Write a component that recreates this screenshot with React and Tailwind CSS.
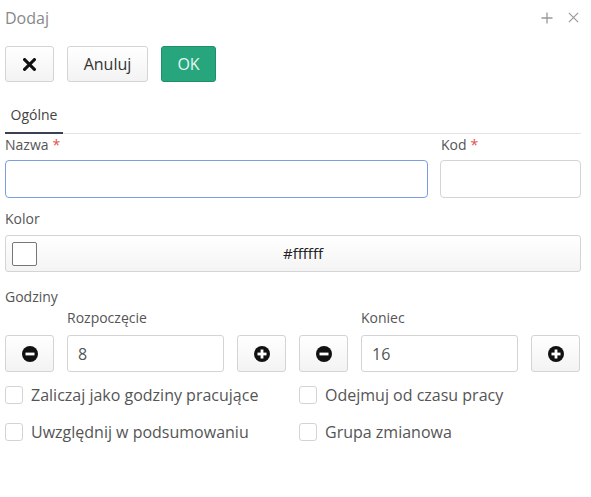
import React from "react";

function Check({ label }) {
	return (
		<label className="flex items-center gap-2 h-[20px]">
			<span className="w-[18px] h-[18px] rounded-[3px] border border-[#d4d4d4] bg-white shrink-0" />
			<span className="text-[16px] text-[#555]">{label}</span>
		</label>
	);
}

function CircleIcon({ plus }) {
	return (
		<svg viewBox="0 0 16 16" className="w-[16px] h-[16px]">
			<circle cx="8" cy="8" r="8" fill="#111" />
			<rect x="3.5" y="6.6" width="9" height="2.8" fill="#fff" />
			{plus && <rect x="6.6" y="3.5" width="2.8" height="9" fill="#fff" />}
		</svg>
	);
}

function Stepper({ label, value }) {
	return (
		<div className="flex flex-col">
			<div className="pl-[62px] h-[28px] text-[14px] text-[#555] leading-[20px] pt-[1px]">{label}</div>
			<div className="flex items-center gap-[13px]">
				<button className="w-[49px] h-[37px] rounded-[3px] border border-[#d4d4d4] bg-gradient-to-b from-white to-[#f3f3f3] flex items-center justify-center">
					<CircleIcon />
				</button>
				<div className="w-[157px] h-[37px] rounded-[3px] border border-[#d4d4d4] bg-white flex items-center px-[10px] text-[16px] text-[#555]">
					{value}
				</div>
				<button className="w-[49px] h-[37px] rounded-[3px] border border-[#d4d4d4] bg-gradient-to-b from-white to-[#f3f3f3] flex items-center justify-center">
					<CircleIcon plus />
				</button>
			</div>
		</div>
	);
}

export default function App() {
	return (
		<div className="w-[591px] h-[497px] bg-white font-['Open_Sans',sans-serif] text-[#555] pl-[5px] pr-[10px]">
			{/* header */}
			<div className="flex items-center justify-between h-[34px] pt-[1px]">
				<span className="text-[16px] text-[#888]">Dodaj</span>
				<div className="flex items-center gap-[15px] text-[#999] pr-[2px]">
					<svg viewBox="0 0 12 12" className="w-[12px] h-[12px]" stroke="currentColor" strokeWidth="1.3">
						<path d="M6 0.5v11M0.5 6h11" />
					</svg>
					<svg viewBox="0 0 12 12" className="w-[11px] h-[11px]" stroke="currentColor" strokeWidth="1.3">
						<path d="M1 1l10 10M11 1L1 11" />
					</svg>
				</div>
			</div>

			{/* toolbar */}
			<div className="flex items-center gap-[13px] mt-[12px]">
				<button className="w-[49px] h-[36px] rounded-[3px] border border-[#d4d4d4] bg-gradient-to-b from-white to-[#f3f3f3] flex items-center justify-center">
					<svg viewBox="0 0 12 12" className="w-[13px] h-[13px]" stroke="#111" strokeWidth="2.8" strokeLinecap="square">
						<path d="M1.5 1.5l9 9M10.5 1.5l-9 9" />
					</svg>
				</button>
				<button className="w-[81px] h-[36px] rounded-[3px] border border-[#d4d4d4] bg-gradient-to-b from-white to-[#f3f3f3] text-[16px] text-[#333]">
					Anuluj
				</button>
				<button className="w-[55px] h-[36px] rounded-[3px] border border-[#1f8f6b] bg-[#27a67e] text-[16px] text-[#e6f6ef]">
					OK
				</button>
			</div>

			{/* tabs */}
			<div className="mt-[17px] border-b border-[#e5e5e5] flex">
				<div className="w-[58px] h-[35px] border-b-2 border-[#3b3f55] -mb-px flex items-center justify-center text-[14px] text-[#444] pb-[2px]">
					Ogólne
				</div>
			</div>

			{/* nazwa / kod */}
			<div className="flex gap-[12px]">
				<div className="flex flex-col w-[423px]">
					<div className="h-[26px] text-[14px] leading-[22px] text-[#555]">
						Nazwa<span className="text-[#e0524f] ml-[4px]">*</span>
					</div>
					<div className="h-[38px] rounded-[4px] border border-[#7b9ee0] bg-white" />
				</div>
				<div className="flex flex-col flex-1">
					<div className="h-[26px] text-[14px] leading-[22px] text-[#555] pl-[1px]">
						Kod<span className="text-[#e0524f] ml-[4px]">*</span>
					</div>
					<div className="h-[38px] rounded-[4px] border border-[#d4d4d4] bg-white" />
				</div>
			</div>

			{/* kolor */}
			<div className="mt-[10px] h-[27px] text-[14px] leading-[22px] text-[#555]">Kolor</div>
			<div className="h-[37px] rounded-[3px] border border-[#d4d4d4] bg-gradient-to-b from-white to-[#f4f4f4] flex items-center relative">
				<span className="absolute left-[6px] w-[25px] h-[24px] rounded-[2px] border border-[#777] bg-white" />
				<span className="flex-1 text-center text-[15px] text-[#222] pl-[20px]">#ffffff</span>
			</div>

			{/* godziny */}
			<div className="mt-[16px] h-[19px] text-[14px] leading-[18px] text-[#555]">Godziny</div>
			<div className="flex gap-[13px]">
				<Stepper label="Rozpoczęcie" value="8" />
				<Stepper label="Koniec" value="16" />
			</div>

			{/* checkboxes */}
			<div className="grid grid-cols-2 gap-x-[12px] gap-y-[17px] mt-[13px] w-[576px]">
				<Check label="Zaliczaj jako godziny pracujące" />
				<Check label="Odejmuj od czasu pracy" />
				<Check label="Uwzględnij w podsumowaniu" />
				<Check label="Grupa zmianowa" />
			</div>
		</div>
	);
}
